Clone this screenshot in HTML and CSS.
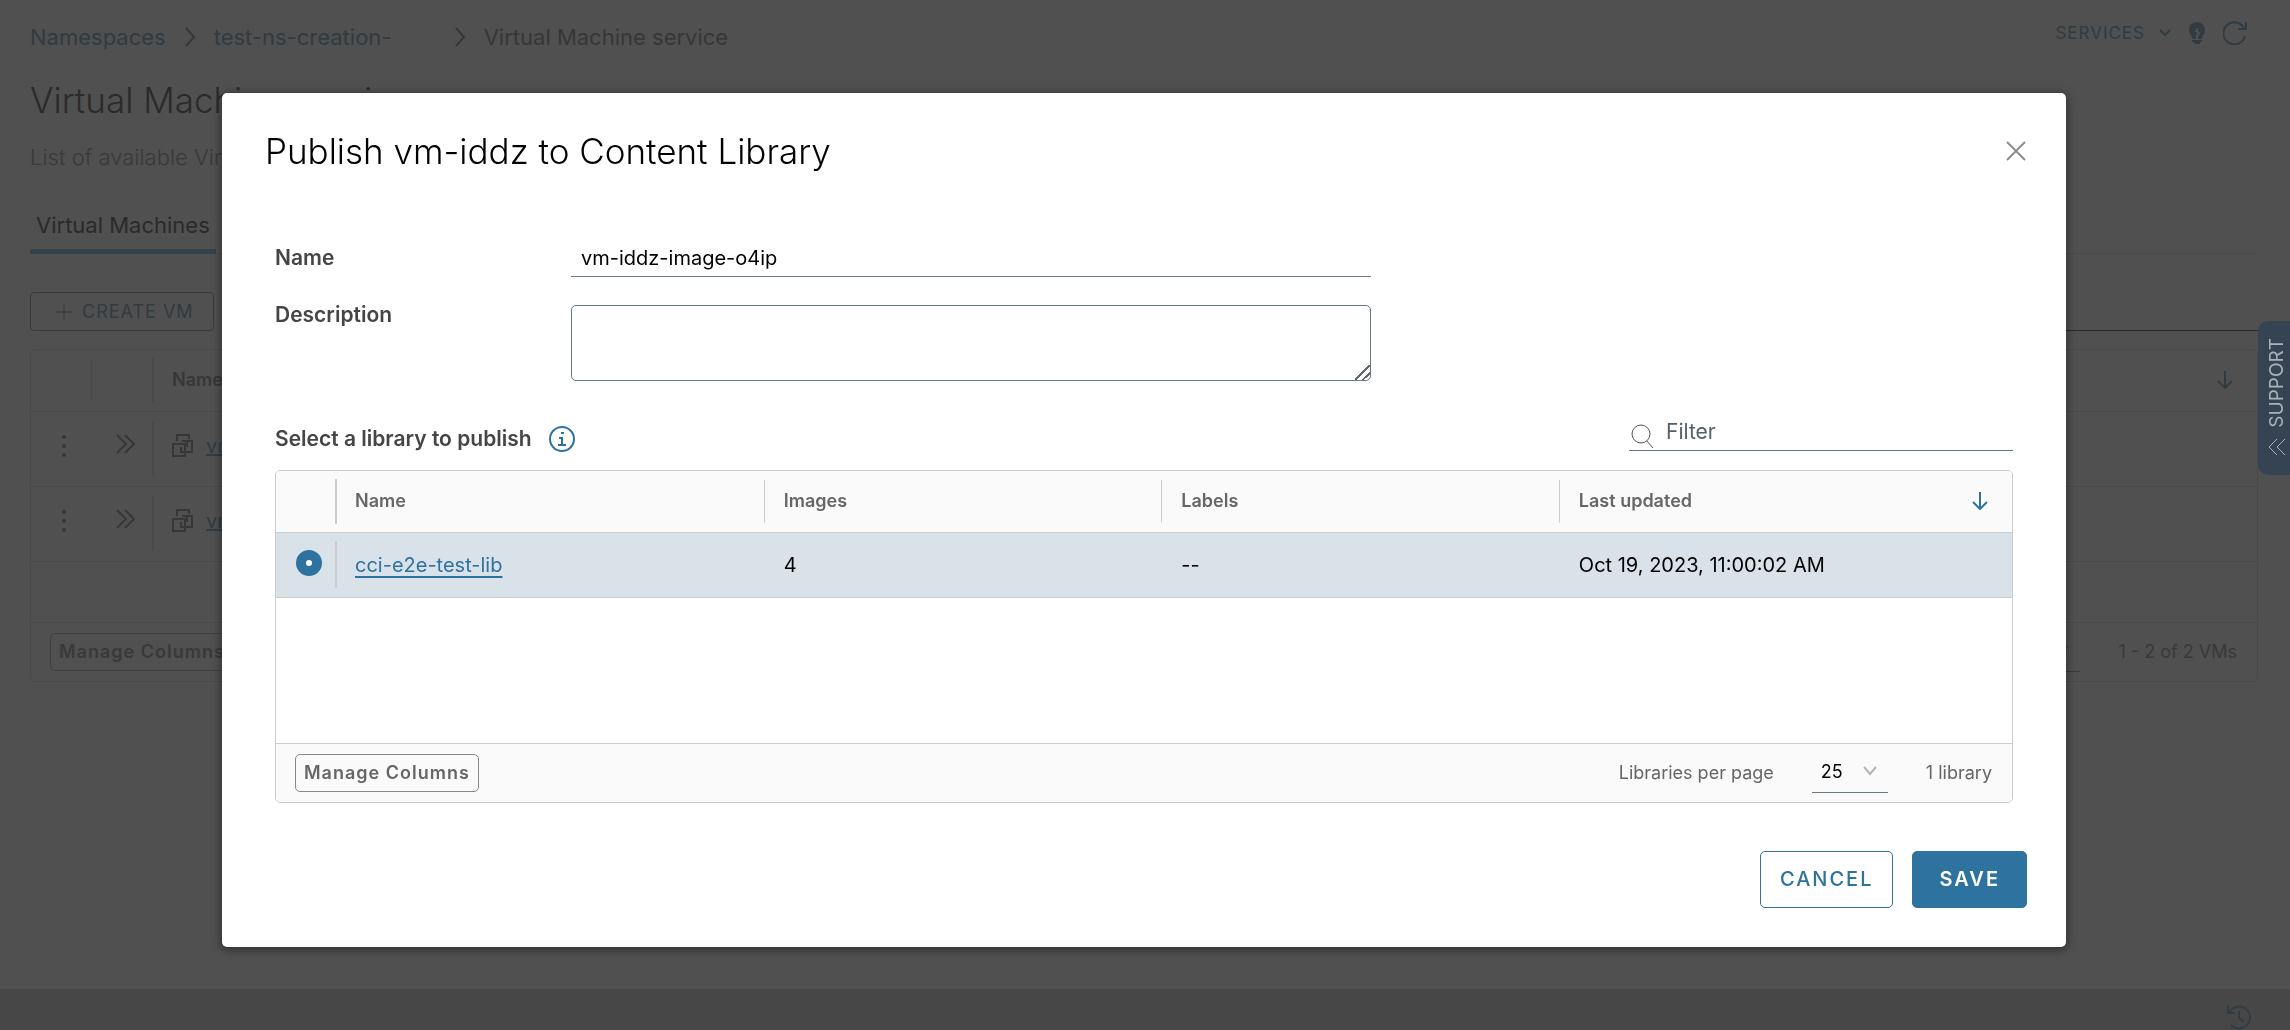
FILE: index.html
```html
<!DOCTYPE html>
<html lang="en">
<head>
<meta charset="utf-8">
<title>Virtual Machine service</title>
<link rel="stylesheet" href="styles.css">
</head>
<body>
<div class="app" inert>
  <main class="page">
    <header class="topbar">
      <nav class="crumbs" aria-label="Breadcrumb">
        <a class="crumb-root" href="#">Namespaces</a>
        <svg class="crumb-sep" width="12" height="20" viewBox="0 0 12 20"><path d="M2 1l8 9-8 9"/></svg>
        <a class="crumb-ns" href="#">test-ns-creation-</a>
        <svg class="crumb-sep" width="12" height="20" viewBox="0 0 12 20"><path d="M2 1l8 9-8 9"/></svg>
        <span>Virtual Machine service</span>
      </nav>
      <div class="tools">
        <button class="services" type="button">SERVICES
          <svg width="12" height="8" viewBox="0 0 12 8"><path d="M1 1l5 5 5-5"/></svg>
        </button>
        <button class="tool" type="button" aria-label="Tips">
          <svg class="bulb" width="16" height="24" viewBox="0 0 16 24"><path class="fill" d="M8 1a8 8 0 0 0-8 8c0 4 3 5 3 9h10c0-4 3-5 3-9a8 8 0 0 0-8-8z"/><path class="spark" d="M9 7l-2 3 3 2-2 3v3"/><path d="M3 20h10M5 22h6"/></svg>
        </button>
        <button class="tool" type="button" aria-label="Refresh">
          <svg width="24" height="24" viewBox="0 0 24 24"><path d="M22 15a11 11 0 1 1-1-8M23 1v7h-8"/></svg>
        </button>
      </div>
    </header>
    <h1 class="page-title">Virtual Machine service</h1>
    <p class="page-desc">List of available Virtual Machines</p>
    <div class="tabs"><button class="tab" type="button">Virtual Machines</button></div>
    <div class="actions">
      <button class="create" type="button">
        <svg width="18" height="18" viewBox="0 0 18 18"><path d="M9 0v18M0 9h18"/></svg>CREATE VM</button>
      <input class="vm-filter" type="text" aria-label="Filter virtual machines">
    </div>
    <section class="grid">
      <table class="vm-table">
        <colgroup><col class="c-menu"><col class="c-expand"><col></colgroup>
        <thead>
          <tr><th></th><th class="rule"></th><th class="rule thick"><div class="th-line">Name
            <svg class="arrow" width="16" height="18" viewBox="0 0 16 18"><path d="M8 0v17M1 10l7 7 7-7"/></svg></div></th></tr>
        </thead>
        <tbody>
          <tr>
            <td><svg class="dots" width="6" height="24" viewBox="0 0 6 24"><circle cx="3" cy="3" r="2"/><circle cx="3" cy="12" r="2"/><circle cx="3" cy="21" r="2"/></svg></td>
            <td><svg class="expand" width="20" height="20" viewBox="0 0 20 20"><path d="M2 1l9 9-9 9M10 1l9 9-9 9"/></svg></td>
            <td class="rule thick"><span class="vm"><svg width="22" height="24" viewBox="0 0 22 24"><path d="M5 7V1h12v4M10 7h10v11H9v-5M15 7v5h-3M1 10h12v12H1z"/></svg><a href="#">vm-iddz</a></span></td>
          </tr>
          <tr>
            <td><svg class="dots" width="6" height="24" viewBox="0 0 6 24"><circle cx="3" cy="3" r="2"/><circle cx="3" cy="12" r="2"/><circle cx="3" cy="21" r="2"/></svg></td>
            <td><svg class="expand" width="20" height="20" viewBox="0 0 20 20"><path d="M2 1l9 9-9 9M10 1l9 9-9 9"/></svg></td>
            <td class="rule thick"><span class="vm"><svg width="22" height="24" viewBox="0 0 22 24"><path d="M5 7V1h12v4M10 7h10v11H9v-5M15 7v5h-3M1 10h12v12H1z"/></svg><a href="#">vm-test</a></span></td>
          </tr>
        </tbody>
      </table>
      <div class="grid-space vm-space"></div>
      <footer class="grid-foot">
        <button class="manage" type="button">Manage Columns</button>
        <div class="pager">
          <span class="select-wrap"><select aria-label="VMs per page"><option>25</option></select><svg width="14" height="10" viewBox="0 0 14 10"><path d="M1 1l6 7 6-7"/></svg></span>
          <span>1 - 2 of 2 VMs</span>
        </div>
      </footer>
    </section>
  </main>
  <div class="taskbar">
    <svg width="26" height="24" viewBox="0 0 26 24"><path d="M3 8a11 11 0 1 1 2 12M2 1v7h7M13 6v7l5 4"/></svg>
  </div>
</div>

<div class="backdrop">
  <section class="modal" role="dialog" aria-modal="true" aria-labelledby="dlg-title">
    <header class="modal-head">
      <h2 id="dlg-title">Publish vm-iddz to Content Library</h2>
      <button class="close" type="button" aria-label="Close"><svg width="20" height="20" viewBox="0 0 20 20"><path d="M1 1l18 18M19 1L1 19"/></svg></button>
    </header>
    <form class="modal-body">
      <div class="field">
        <label for="name">Name</label>
        <input id="name" class="line-input" type="text" value="vm-iddz-image-o4ip">
      </div>
      <div class="field">
        <label for="desc">Description</label>
        <textarea id="desc"></textarea>
      </div>
      <div class="lib-head">
        <h3>Select a library to publish
          <svg width="26" height="26" viewBox="0 0 26 26"><circle cx="13" cy="13" r="12"/><path d="M10 12h3v7M9 19h8M12 7h3"/></svg></h3>
        <div class="filter">
          <svg width="24" height="24" viewBox="0 0 24 24"><circle cx="10" cy="10" r="9"/><path d="M16 17l6 7"/></svg>
          <input type="text" placeholder="Filter" aria-label="Filter">
        </div>
      </div>
      <div class="grid">
        <table class="lib-table">
          <colgroup><col class="c-radio"><col class="c-name"><col class="c-mid"><col class="c-mid"><col></colgroup>
          <thead>
            <tr><th></th><th class="rule thick">Name</th><th class="rule">Images</th><th class="rule">Labels</th>
            <th class="rule"><div class="th-line">Last updated <svg class="arrow" width="16" height="18" viewBox="0 0 16 18"><path d="M8 0v17M1 10l7 7 7-7"/></svg></div></th></tr>
          </thead>
          <tbody>
            <tr class="selected">
              <td><input class="radio" type="radio" name="library" aria-label="cci-e2e-test-lib" checked></td>
              <td class="rule thick"><a href="#">cci-e2e-test-lib</a></td>
              <td>4</td><td>--</td><td>Oct 19, 2023, 11:00:02 AM</td>
            </tr>
          </tbody>
        </table>
        <div class="grid-space lib-space"></div>
        <footer class="grid-foot">
          <button class="manage" type="button">Manage Columns</button>
          <div class="pager">
            <label for="size">Libraries per page</label>
            <span class="select-wrap"><select id="size"><option>25</option></select><svg width="14" height="10" viewBox="0 0 14 10"><path d="M1 1l6 7 6-7"/></svg></span>
            <span>1 library</span>
          </div>
        </footer>
      </div>
    </form>
    <footer class="modal-foot">
      <button class="btn" type="button">CANCEL</button>
      <button class="btn primary" type="button">SAVE</button>
    </footer>
  </section>
</div>

<button class="support" type="button">
  <svg width="18" height="18" viewBox="0 0 18 18"><path d="M9 1L1 9l8 8M17 1L9 9l8 8"/></svg>
  <span>SUPPORT</span>
</button>
</body>
</html>
```
FILE: styles.css
```css
* { box-sizing: border-box; }

body {
  margin: 0;
  font-family: Inter, "Open Sans", sans-serif;
  font-size: 20px;
  line-height: 24px;
  color: #000;
  background: #fafafa;
}

button, input, select, textarea { font: inherit; color: inherit; }
button { padding: 0; border: 0; background: none; }
h1, h2, h3, p { margin: 0; font-weight: 400; }
a { color: #2e72a0; }
svg { flex: none; display: block; fill: none; stroke: currentColor; stroke-width: 2; }

/* Application page */
.app { min-height: 100vh; display: flex; flex-direction: column; overflow: hidden; }
.page { flex: 1; padding: 20px 32px 0 30px; }

.topbar { display: flex; justify-content: space-between; align-items: flex-start; height: 60px; }
.crumbs { display: flex; align-items: center; gap: 18px; height: 34px; font-size: 22px; color: #565656; }
.crumbs a { text-decoration: none; }
.crumb-ns { width: 222px; }

.tools { display: flex; align-items: center; gap: 18px; height: 26px; padding-right: 11px; color: #2e72a0; }
.services { display: flex; align-items: center; gap: 14px; font-size: 17px; letter-spacing: 1px; }
.bulb .fill { fill: currentColor; stroke: none; }
.bulb .spark { stroke: #fafafa; }

.page-title { font-size: 35px; line-height: 40px; font-weight: 300; }
.page-desc { margin-top: 22px; font-size: 22px; line-height: 30px; color: #666; font-weight: 300; }
.tabs { display: flex; height: 44px; margin-top: 38px; border-bottom: 1px solid #ccc; }
.tab { height: 44px; padding: 0 6px 10px; border-bottom: 5px solid #489fdb; font-size: 22px; white-space: nowrap; }

.actions { display: flex; justify-content: space-between; padding-top: 38px; }
.create { display: flex; align-items: center; gap: 9px; height: 39px; padding: 0 19px 0 24px; border: 1px solid #2e72a0; border-radius: 4px; font-size: 18px; letter-spacing: 1px; color: #2e72a0; }
.create svg { stroke-width: 1; }
.vm-filter { width: 384px; border: 0; border-bottom: 1px solid #000; background: none; }
.page .grid { margin-top: 18px; }
.page .grid, .page th, .page .grid-foot { background-color: transparent; }

/* Data grids */
.grid { border: 1px solid #ccc; border-radius: 5px; background: #fff; overflow: hidden; }
.grid table { width: 100%; table-layout: fixed; border-collapse: collapse; }
.grid th { height: 61px; padding: 0 20px; text-align: left; font-size: 18px; font-weight: 600; color: #666; background-color: #fafafa; border-bottom: 1px solid #ccc; }
.grid td { height: 65px; padding: 0 20px; border-bottom: 1px solid #ccc; }
.grid .rule { background-image: linear-gradient(#ccc, #ccc); background-repeat: no-repeat; background-position: left center; background-size: 1px 70%; }
.grid .thick { background-size: 2px 74%; }
.th-line { display: flex; justify-content: space-between; align-items: center; }
.arrow { color: #2e72a0; margin-right: 4px; }
.grid-foot { display: flex; justify-content: space-between; align-items: center; height: 59px; padding: 0 20px 0 19px; background: #fafafa; border-top: 1px solid #ccc; font-size: 18px; color: #666; }
.manage { height: 38px; padding: 0 8px; border: 1px solid #888; border-radius: 5px; font-weight: 600; letter-spacing: 1px; color: #666; }
.pager { display: flex; align-items: center; gap: 38px; }
.select-wrap { position: relative; display: flex; color: #000; }
.select-wrap select { width: 76px; height: 40px; padding: 0 9px; border: 0; border-bottom: 1px solid #667985; background: none; appearance: none; font-size: 18px; }
.select-wrap svg { position: absolute; right: 11px; top: 13px; color: #b3b3b3; pointer-events: none; }

.c-menu { width: 60px; }
.c-expand { width: 61px; }
.c-radio { width: 59px; }
.c-name { width: 24.7%; }
.c-mid { width: 22.9%; }

.vm-table .dots { margin-left: 10px; fill: currentColor; stroke: none; }
.vm-table .expand { margin-left: 4px; margin-bottom: 4px; }
.page .vm-table td { height: 75px; padding-bottom: 6px; color: #565656; }
.page .vm-table th { color: #565656; }
.vm { display: flex; align-items: center; gap: 12px; }
.vm-space { height: 60px; }

.taskbar { display: flex; justify-content: flex-end; height: 41px; padding: 16px 38px 0; background: #c4c4c4; color: #2e72a0; }

/* Dialog */
.backdrop { position: fixed; inset: 0; padding: 93px 224px 0 222px; background: rgba(49, 49, 49, 0.85); }
.modal { background: #fff; border-radius: 5px; box-shadow: 0 2px 8px 2px rgba(0, 0, 0, 0.35); padding: 36px 39px 39px 43px; }
.modal-head { display: flex; justify-content: space-between; align-items: center; height: 44px; }
.modal-head h2 { font-size: 35px; line-height: 44px; font-weight: 300; }
.close { padding: 1px; color: #8c8c8c; }
.modal-body { padding: 66px 14px 0 10px; }

.field { display: grid; grid-template-columns: 296px 800px; align-items: start; margin-bottom: 28px; }
.field label { padding-top: 7px; font-size: 21px; font-weight: 600; color: #454545; }
.line-input { height: 38px; padding: 0 10px; border: 0; border-bottom: 1px solid #667985; outline: 0; }
.field textarea { height: 76px; border: 1px solid #667985; border-radius: 5px; resize: vertical; }
.field textarea::-webkit-resizer { background: linear-gradient(135deg, transparent 46%, #666 46% 54%, transparent 54% 72%, #666 72% 80%, transparent 80%); }
.field:nth-child(2) label { padding-top: 0; line-height: 20px; }

.lib-head { display: flex; justify-content: space-between; align-items: center; height: 38px; margin: 32px 0 19px; }
.lib-head h3 { display: flex; align-items: center; gap: 17px; padding-top: 14px; font-size: 21px; font-weight: 600; color: #454545; }
.lib-head h3 svg { color: #2e72a0; }
.filter { display: flex; align-items: center; width: 384px; height: 38px; border-bottom: 1px solid #667985; color: #565656; }
.filter svg { margin: 8px 11px 0 2px; stroke-width: 1; }
.filter input { flex: 1; min-width: 0; padding: 0; border: 0; outline: 0; font-size: 21px; }
.filter input::placeholder { color: #52616b; opacity: 1; }

.selected td { background-color: #dae2e9; }
.radio { display: block; appearance: none; width: 26px; height: 26px; margin: 0 0 4px; border-radius: 50%; background: #2e72a0; border: 10px solid #2e72a0; }
.radio:checked { background: #fff; }
.lib-table a { text-underline-offset: 4px; text-decoration-thickness: 2px; }
.lib-space { height: 145px; }

.modal-foot { display: flex; justify-content: flex-end; gap: 19px; margin-top: 48px; }
.btn { height: 57px; padding: 0 19px; border: 1px solid #2e72a0; border-radius: 5px; font-weight: 500; letter-spacing: 2px; color: #2e72a0; }
.primary { padding: 0 26px; font-weight: 600; color: #fff; background: #2e72a0; }

/* Side tab */
.support { position: fixed; right: 0; top: 321px; display: flex; flex-direction: column-reverse; align-items: center; gap: 10px; width: 32px; height: 154px; padding: 17px 2px 0 8px; justify-content: flex-end; border-radius: 10px 0 0 10px; background: #354352; color: #a8b2bb; font-size: 19px; }
.support span { writing-mode: vertical-rl; transform: rotate(180deg); }
.support svg { stroke-width: 1; }
```
